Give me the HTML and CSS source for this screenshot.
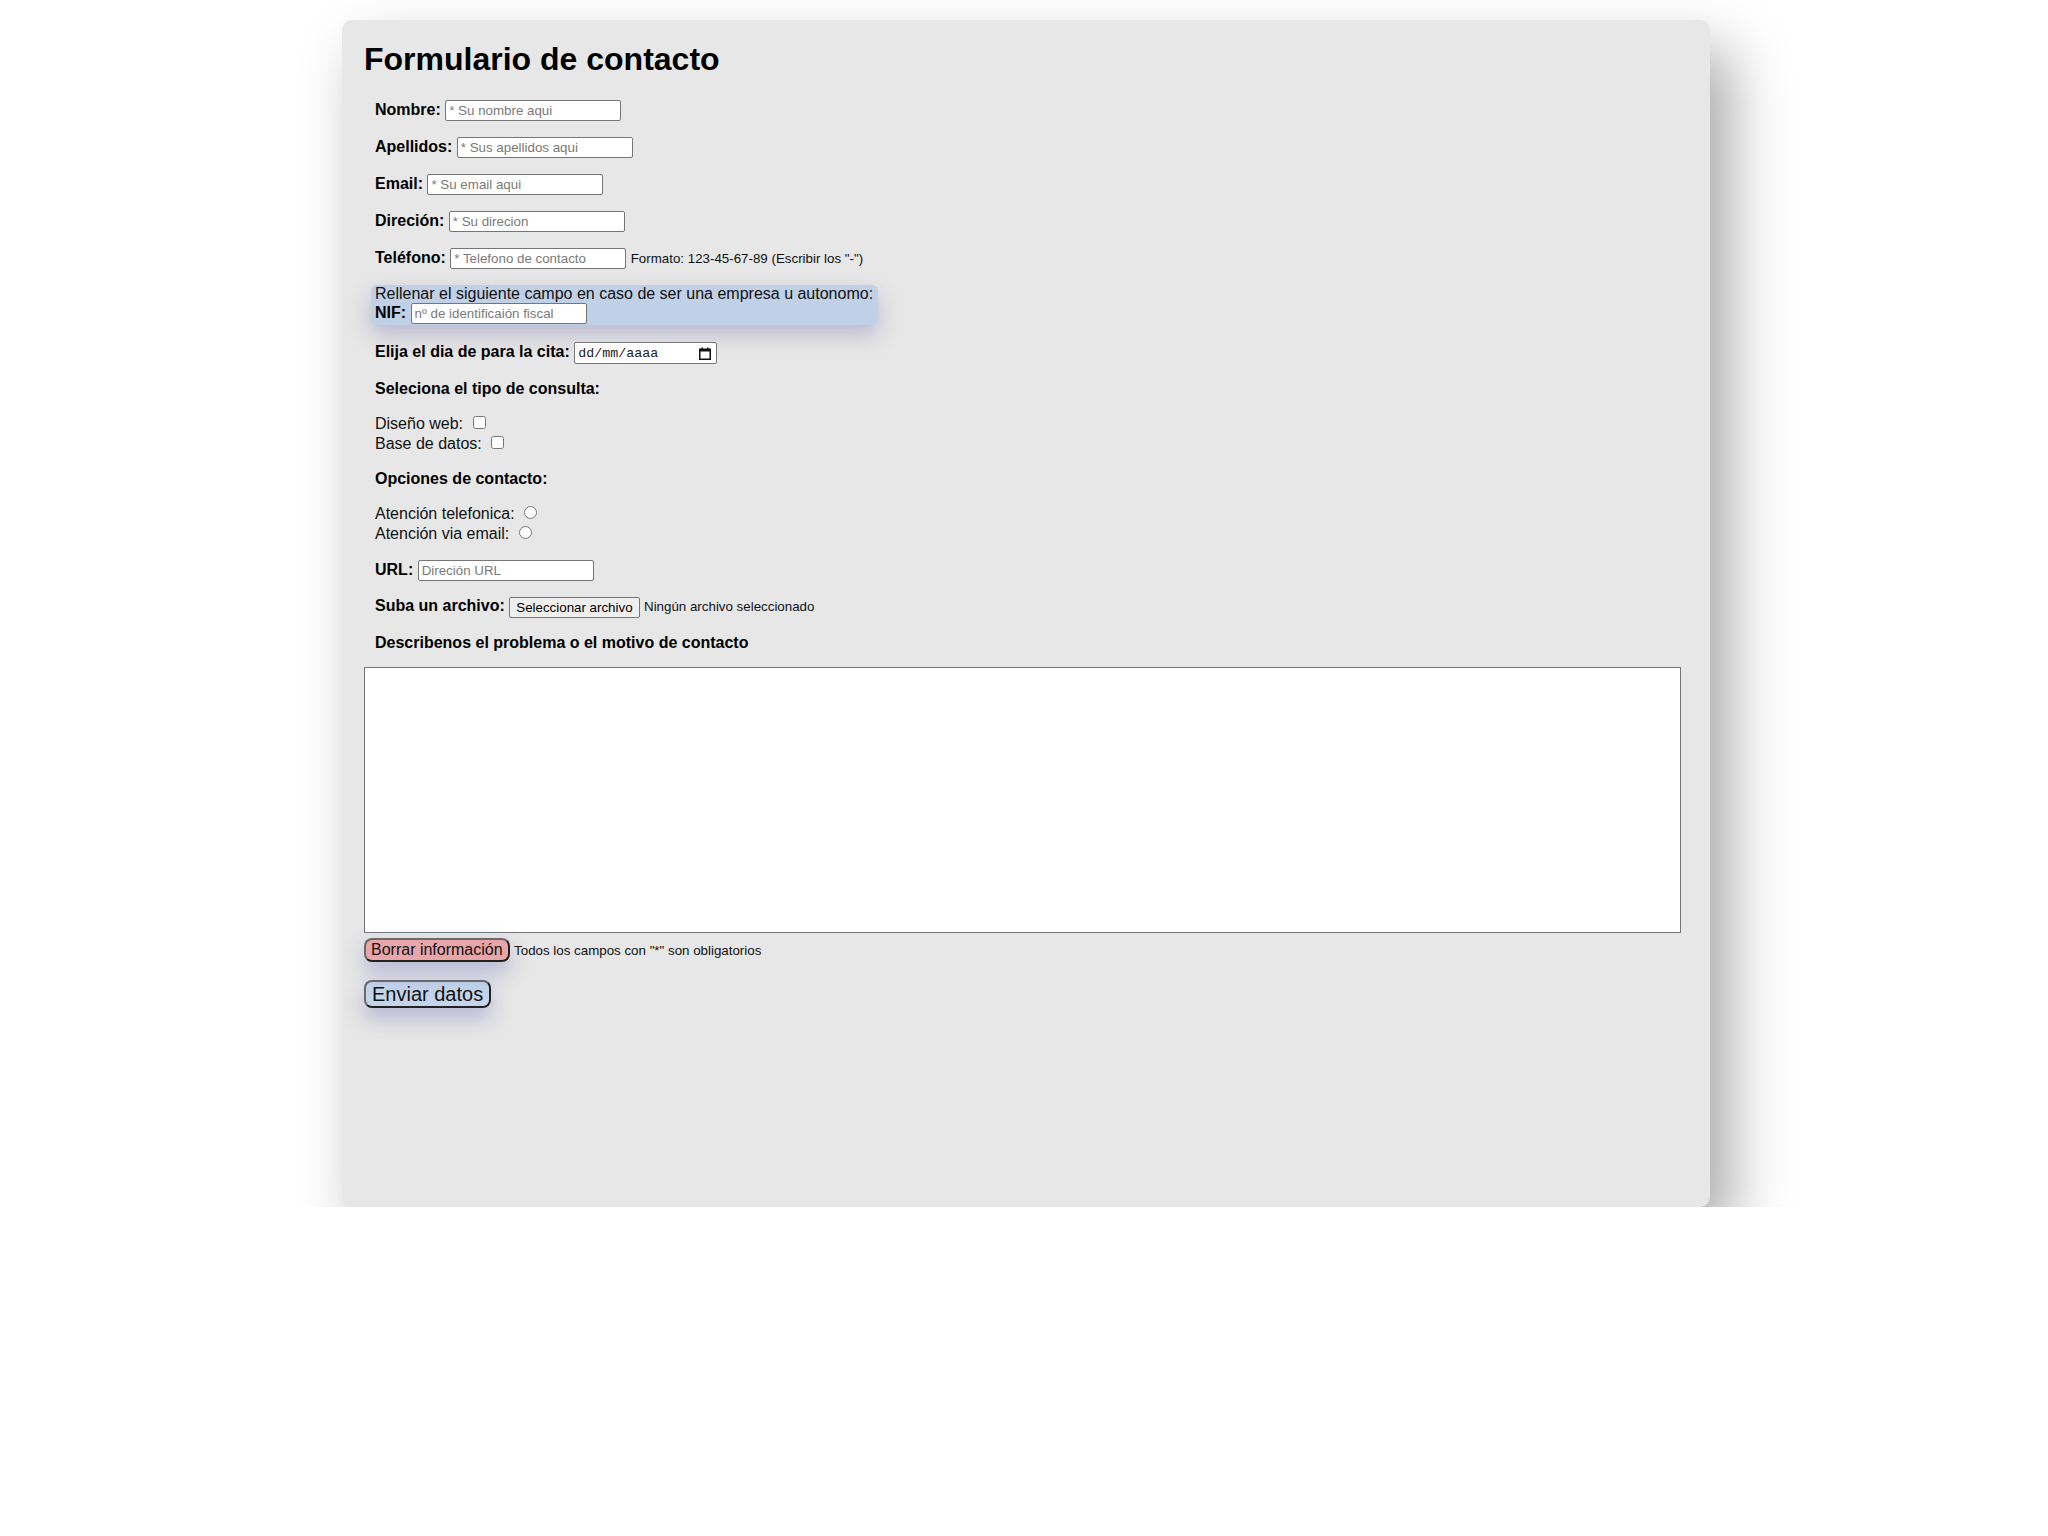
FILE: index.html
```html
<!DOCTYPE html>
<html lang="es">
<head>
<meta charset="utf-8">
<title>Formulario de contacto</title>
<link rel="stylesheet" href="styles.css">
</head>
<body>
<div class="card">
  <h1 class="title">Formulario de contacto</h1>
  <form class="form">
    <p class="field"><label class="lbl" for="nombre">Nombre:</label> <input class="txt" id="nombre" type="text" placeholder="* Su nombre aqui"></p>
    <p class="field"><label class="lbl" for="apellidos">Apellidos:</label> <input class="txt" id="apellidos" type="text" placeholder="* Sus apellidos aqui"></p>
    <p class="field"><label class="lbl" for="email">Email:</label> <input class="txt" id="email" type="text" placeholder="* Su email aqui"></p>
    <p class="field"><label class="lbl" for="direcion">Direción:</label> <input class="txt" id="direcion" type="text" placeholder="* Su direcion"></p>
    <p class="field"><label class="lbl" for="telefono">Teléfono:</label> <input class="txt" id="telefono" type="text" placeholder="* Telefono de contacto"> <span class="hint">Formato: 123-45-67-89 (Escribir los "-")</span></p>
    <div class="nif-box">Rellenar el siguiente campo en caso de ser una empresa u autonomo:<br><label class="lbl" for="nif">NIF:</label> <input class="txt" id="nif" type="text" placeholder="nº de identificaión fiscal"></div>
    <p class="field date-row"><label class="lbl">Elija el dia de para la cita:</label> <span class="date-input"><span class="date-text">dd/mm/aaaa</span><svg class="cal" width="12" height="13" viewBox="0 0 12 13"><rect x="0.75" y="2.25" width="10.5" height="10" fill="none" stroke="#111" stroke-width="1.5"/><rect x="0.75" y="2" width="10.5" height="2.5" fill="#111"/><rect x="2.5" y="0.5" width="1.5" height="2.5" fill="#111"/><rect x="8" y="0.5" width="1.5" height="2.5" fill="#111"/></svg></span></p>
    <p class="field lbl">Seleciona el tipo de consulta:</p>
    <p class="field opts">Diseño web: <input class="chk" type="checkbox"><br>Base de datos: <input class="chk" type="checkbox"></p>
    <p class="field lbl">Opciones de contacto:</p>
    <p class="field opts">Atención telefonica: <input class="chk" type="radio" name="c"><br>Atención via email: <input class="chk" type="radio" name="c"></p>
    <p class="field"><label class="lbl" for="url">URL:</label> <input class="txt" id="url" type="text" placeholder="Direción URL"></p>
    <p class="field"><label class="lbl">Suba un archivo:</label> <span class="file-btn">Seleccionar archivo</span> <span class="hint">Ningún archivo seleccionado</span></p>
    <p class="field lbl desc">Describenos el problema o el motivo de contacto</p>
    <textarea class="msg"></textarea>
    <div class="actions"><button type="reset" class="btn btn-reset">Borrar información</button> <span class="hint">Todos los campos con "*" son obligatorios</span></div>
    <button type="button" class="btn btn-send">Enviar datos</button>
  </form>
</div>
</body>
</html>
```
FILE: styles.css
```css
html, body {
  margin: 0;
  padding: 0;
  background: #ffffff;
}
body {
  font-family: "Liberation Sans", Arial, sans-serif;
  font-size: 16px;
  color: #111;
}
.card {
  display: flow-root;
  box-sizing: border-box;
  width: 1368px;
  height: 1187px;
  margin: 20px 0 0 calc(50% - 682px);
  padding: 0 22px;
  background: #e7e7e7;
  border-radius: 10px;
  box-shadow: 20px 30px 60px rgba(0, 0, 0, 0.35);
}
.title {
  font-size: 32px;
  font-weight: bold;
  margin: 21px 0 22px;
  color: #000;
}
.form {
  margin: 0;
}
.field {
  margin: 16px 0 16px 11px;
}
.date-row {
  margin-top: 17px;
}
.opts {
  line-height: 20px;
}
.desc {
  margin-bottom: 15px;
}
.lbl {
  font-weight: bold;
  color: #000;
}
.txt {
  box-sizing: border-box;
  width: 176px;
  height: 21px;
  padding: 1px 3px;
  border: 1px solid #767676;
  border-radius: 2px;
  background: #fff;
  font-family: "Liberation Sans", Arial, sans-serif;
  font-size: 13.33px;
  vertical-align: baseline;
}
.txt::placeholder {
  color: #7a7a7a;
}
.hint {
  font-size: 13.33px;
  color: #111;
}
.nif-box {
  width: fit-content;
  margin: 16px 0 16px 7px;
  padding: 0 5px 1px 4px;
  background: #c0d0e6;
  border-radius: 6px;
  box-shadow: 0 10px 22px rgba(90, 90, 160, 0.32);
}
.date-input {
  display: inline-flex;
  align-items: center;
  justify-content: space-between;
  box-sizing: border-box;
  width: 143px;
  height: 22px;
  padding: 0 5px 0 3px;
  border: 1px solid #767676;
  border-radius: 2px;
  background: #fff;
}
.date-text {
  font-family: "Liberation Mono", "Courier New", monospace;
  font-size: 13.33px;
  color: #222;
}
.cal {
  display: block;
}
.chk {
  width: 13px;
  height: 13px;
  margin: 0 3px 0 5px;
  vertical-align: 0;
}
.file-btn {
  display: inline-block;
  box-sizing: border-box;
  height: 21px;
  padding: 2px 6px;
  border: 1px solid #767676;
  border-radius: 2px;
  background: #efefef;
  font-size: 13.33px;
  line-height: 15px;
  color: #000;
  vertical-align: -1px;
}
.msg {
  display: block;
  box-sizing: border-box;
  width: 1317px;
  height: 266px;
  margin: 0 0 5px;
  padding: 2px;
  border: 1px solid #767676;
  background: #fff;
  resize: none;
}
.actions {
  margin: 0;
}
.btn {
  font-family: "Liberation Sans", Arial, sans-serif;
  color: #111;
  border-style: solid;
  border-color: #6a6a6a #222 #222 #6a6a6a;
  border-radius: 8px;
  box-shadow: 0 10px 22px rgba(70, 70, 170, 0.32);
  cursor: pointer;
}
.btn-reset {
  box-sizing: border-box;
  height: 24px;
  padding: 0 5px;
  border-width: 2px;
  background: #e9a6a8;
  font-size: 16px;
  line-height: 18px;
}
.btn-send {
  display: block;
  box-sizing: border-box;
  height: 28px;
  margin-top: 18px;
  padding: 0 6px;
  border-width: 2px;
  background: #c4d4ea;
  font-size: 20px;
  line-height: 22px;
}
```
